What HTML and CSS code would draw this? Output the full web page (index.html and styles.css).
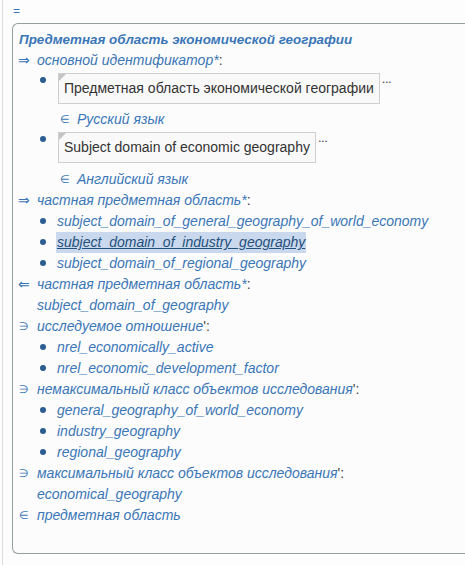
FILE: index.html
```html
<!DOCTYPE html>
<html>
<head>
<meta charset="utf-8">
<link rel="stylesheet" href="styles.css">
</head>
<body>
<div class="page">
  <div class="top-eq">=</div>
  <div class="card">
    <div class="title">Предметная область экономической географии</div>

    <div class="rel">
      <span class="icon">⇒</span>
      <div class="rel-body">
        <div class="label">основной идентификатор<span class="star">*</span><span class="colon">:</span></div>
        <ul class="list">
          <li class="item boxed">
            <span class="bullet"></span>
            <div class="box-col">
              <div class="box-line"><span class="box">Предметная область экономической географии</span><span class="more">...</span></div>
              <div class="lang"><span class="elem">∈</span><span class="link">Русский язык</span></div>
            </div>
          </li>
          <li class="item boxed">
            <span class="bullet"></span>
            <div class="box-col">
              <div class="box-line"><span class="box">Subject domain of economic geography</span><span class="more">...</span></div>
              <div class="lang"><span class="elem">∈</span><span class="link">Английский язык</span></div>
            </div>
          </li>
        </ul>
      </div>
    </div>

    <div class="rel">
      <span class="icon">⇒</span>
      <div class="rel-body">
        <div class="label">частная предметная область<span class="star">*</span><span class="colon">:</span></div>
        <ul class="list">
          <li class="item"><span class="bullet"></span><span class="link">subject_domain_of_general_geography_of_world_economy</span></li>
          <li class="item"><span class="bullet"></span><span class="link sel">subject_domain_of_industry_geography</span></li>
          <li class="item"><span class="bullet"></span><span class="link">subject_domain_of_regional_geography</span></li>
        </ul>
      </div>
    </div>

    <div class="rel">
      <span class="icon">⇐</span>
      <div class="rel-body">
        <div class="label">частная предметная область<span class="star">*</span><span class="colon">:</span></div>
        <div class="link single">subject_domain_of_geography</div>
      </div>
    </div>

    <div class="rel">
      <span class="icon small">∋</span>
      <div class="rel-body">
        <div class="label">исследуемое отношение<span class="colon">':</span></div>
        <ul class="list">
          <li class="item"><span class="bullet"></span><span class="link">nrel_economically_active</span></li>
          <li class="item"><span class="bullet"></span><span class="link">nrel_economic_development_factor</span></li>
        </ul>
      </div>
    </div>

    <div class="rel">
      <span class="icon small">∋</span>
      <div class="rel-body">
        <div class="label">немаксимальный класс объектов исследования<span class="colon">':</span></div>
        <ul class="list">
          <li class="item"><span class="bullet"></span><span class="link">general_geography_of_world_economy</span></li>
          <li class="item"><span class="bullet"></span><span class="link">industry_geography</span></li>
          <li class="item"><span class="bullet"></span><span class="link">regional_geography</span></li>
        </ul>
      </div>
    </div>

    <div class="rel">
      <span class="icon small">∋</span>
      <div class="rel-body">
        <div class="label">максимальный класс объектов исследования<span class="colon">':</span></div>
        <div class="link single">economical_geography</div>
      </div>
    </div>

    <div class="rel">
      <span class="icon small">∈</span>
      <div class="rel-body">
        <div class="label">предметная область</div>
      </div>
    </div>
  </div>
</div>
</body>
</html>
```

FILE: styles.css
```css
html, body {
  margin: 0;
  padding: 0;
  background: #fdfdfd;
}
body {
  font-family: "Liberation Sans", Arial, sans-serif;
  font-size: 14px;
  line-height: 21px;
  color: #333;
}
.page {
  margin-left: 2px;
  border-left: 1px solid #dcdcdc;
  padding-left: 9px;
  min-height: 565px;
  box-sizing: border-box;
}
.top-eq {
  height: 23px;
  line-height: 22px;
  color: #3a76b7;
  font-size: 12px;
  padding-left: 1px;
}
.card {
  border: 1px solid #93a09b;
  border-right: none;
  border-radius: 6px 0 0 6px;
  background: #fcfcfc;
  padding: 5px 0 27px 5px;
}
.title {
  font-weight: bold;
  font-style: italic;
  font-size: 13.4px;
  color: #3a76b7;
  padding-left: 1px;
}
.rel {
  display: flex;
}
.icon {
  width: 19px;
  flex: none;
  color: #3a76b7;
  font-size: 14px;
}
.icon.small {
  font-size: 11px;
  padding-left: 1px;
  width: 18px;
}
.rel-body {
  flex: 1;
  min-width: 0;
}
.label, .link {
  font-style: italic;
  color: #3a76b7;
  white-space: nowrap;
}
.star { color: #3a76b7; }
.colon {
  font-style: normal;
  color: #444;
}
.list {
  list-style: none;
  margin: 0;
  padding: 0;
}
.item {
  display: flex;
  align-items: flex-start;
}
.bullet {
  flex: none;
  width: 20px;
  height: 21px;
}
.bullet::before {
  content: "";
  display: block;
  width: 6px;
  height: 6px;
  border-radius: 50%;
  background: #2b5d91;
  margin: 7px 0 0 3px;
}
.item.boxed {
  margin-top: 2px;
}
.item.boxed .bullet::before {
  margin-top: 4px;
}
.box-col {
  display: flex;
  flex-direction: column;
  margin-left: 1px;
}
.box-line {
  display: flex;
  align-items: flex-start;
}
.box {
  position: relative;
  display: inline-block;
  height: 29px;
  line-height: 29px;
  padding: 0 5px;
  border: 1px solid #cfcfcf;
  background: #f9f9f9;
  color: #333;
  font-style: normal;
  white-space: nowrap;
}
.box::before {
  content: "";
  position: absolute;
  left: 0;
  top: 0;
  border-top: 7px solid #c4c4c4;
  border-right: 7px solid transparent;
}
.more {
  font-size: 13px;
  line-height: 12px;
  margin-left: 2px;
  letter-spacing: -0.5px;
  color: #444;
}
.lang {
  display: flex;
  margin-top: 5px;
}
.elem {
  width: 19px;
  flex: none;
  font-size: 11px;
  color: #3a76b7;
  padding-left: 2px;
  box-sizing: border-box;
}
.item.boxed + .item.boxed .lang {
  margin-top: 6px;
}
.sel {
  background: #c9d8ec;
  color: #24507e;
  text-decoration: underline;
  padding: 0 1px;
  margin-left: -1px;
}
```
